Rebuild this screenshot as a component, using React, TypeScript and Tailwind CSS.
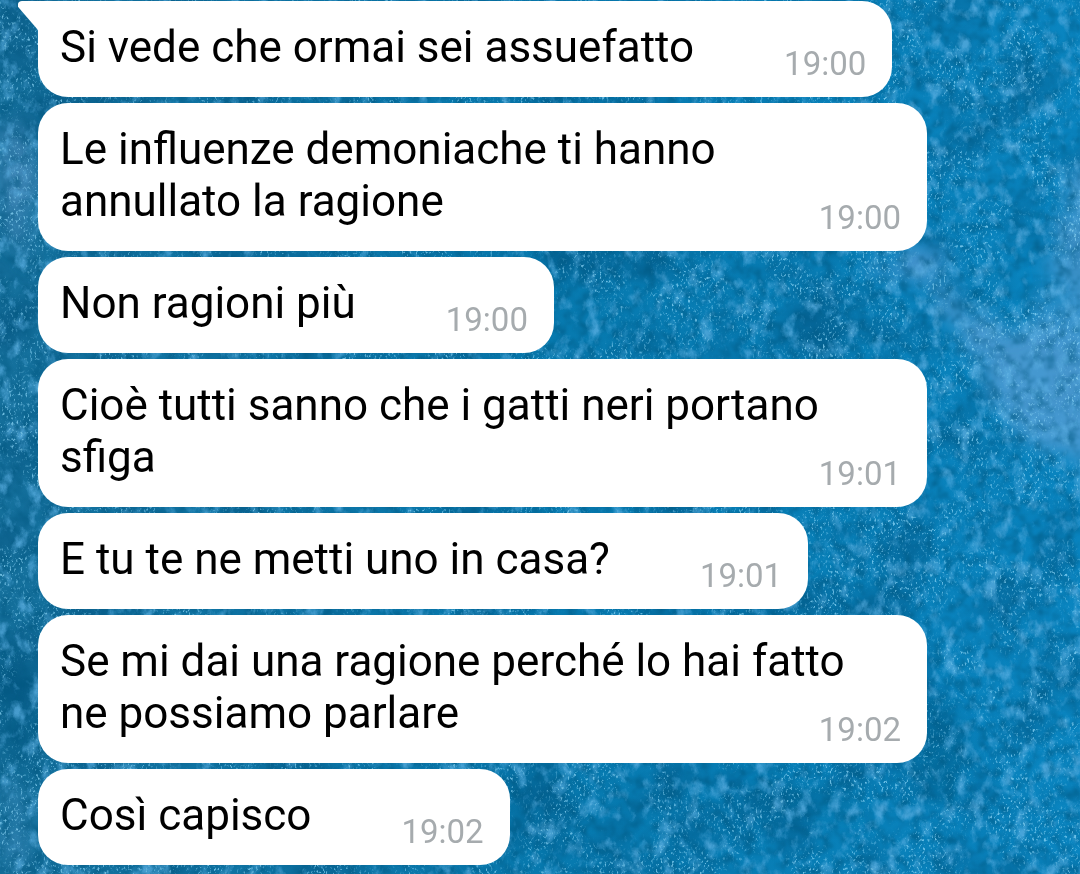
type Message = { text: string; time: string };

const messages: Message[] = [
  { text: "Si vede che ormai sei assuefatto", time: "19:00" },
  { text: "Le influenze demoniache ti hanno annullato la ragione", time: "19:00" },
  { text: "Non ragioni più", time: "19:00" },
  { text: "Cioè tutti sanno che i gatti neri portano sfiga", time: "19:01" },
  { text: "E tu te ne metti uno in casa?", time: "19:01" },
  { text: "Se mi dai una ragione perché lo hai fatto ne possiamo parlare", time: "19:02" },
  { text: "Così capisco", time: "19:02" },
];

function Wallpaper() {
  return (
    <svg
      aria-hidden="true"
      className="absolute inset-0 h-full w-full"
      viewBox="0 0 1080 874"
      preserveAspectRatio="xMidYMid slice"
    >
      <defs>
        <linearGradient id="base" x1="0" y1="0" x2="1" y2="0">
          <stop offset="0" stopColor="#15709c" />
          <stop offset="0.5" stopColor="#0779ae" />
          <stop offset="1" stopColor="#0a85c0" />
        </linearGradient>
        <filter id="soft" x="-50%" y="-50%" width="200%" height="200%">
          <feTurbulence type="fractalNoise" baseFrequency="0.04" numOctaves="3" seed="4" result="n" />
          <feDisplacementMap in="SourceGraphic" in2="n" scale="60" result="d" />
          <feGaussianBlur in="d" stdDeviation="9" />
        </filter>
        <filter id="shade" x="0" y="0" width="100%" height="100%" colorInterpolationFilters="sRGB">
          <feTurbulence type="fractalNoise" baseFrequency="0.014" numOctaves="6" seed="11" />
          <feColorMatrix values="0 0 0 0 0.01  0 0 0 0 0.31  0 0 0 0 0.48  2.4 0 0 0 -1.05" />
        </filter>
        <filter id="grain" x="0" y="0" width="100%" height="100%" colorInterpolationFilters="sRGB">
          <feTurbulence type="fractalNoise" baseFrequency="0.07 0.05" numOctaves="6" seed="7" result="fine" />
          <feColorMatrix in="fine" values="0 0 0 0 0.36  0 0 0 0 0.69  0 0 0 0 0.89  3.2 0 0 0 -1.65" result="haze" />
          <feTurbulence type="fractalNoise" baseFrequency="0.43 0.31" numOctaves="2" seed="57" result="tiny" />
          <feColorMatrix in="tiny" values="0 0 0 0 0.55  0 0 0 0 0.84  0 0 0 0 0.97  0 5 0 0 -2.85" result="specks" />
          <feTurbulence type="fractalNoise" baseFrequency="0.02" numOctaves="5" seed="23" result="wide" />
          <feColorMatrix in="wide" values="0 0 0 0 1  0 0 0 0 1  0 0 0 0 1  0 4 0 0 -1.5" result="mask" />
          <feComposite in="specks" in2="mask" operator="in" result="cut" />
          <feGaussianBlur in="cut" stdDeviation="0.5" result="points" />
          <feMerge>
            <feMergeNode in="haze" />
            <feMergeNode in="points" />
          </feMerge>
        </filter>
        <filter id="darkGrain" x="0" y="0" width="100%" height="100%" colorInterpolationFilters="sRGB">
          <feTurbulence type="fractalNoise" baseFrequency="0.09" numOctaves="5" seed="31" result="n" />
          <feColorMatrix in="n" values="0 0 0 0 0  0 0 0 0 0.34  0 0 0 0 0.5  0 2.5 0 0 -1.1" result="c" />
          <feGaussianBlur in="c" stdDeviation="0.8" />
        </filter>
      </defs>
      <rect width="1080" height="874" fill="url(#base)" />
      <rect width="1080" height="874" filter="url(#shade)" opacity="0.5" />
      <g filter="url(#soft)">
        <path
          d="M890 225 Q960 330 1000 410 Q1040 470 1100 455 V345 Q1030 320 980 330 Z"
          fill="#5a9fd6"
          opacity="0.75"
        />
        <path d="M1060 180 L1100 160 V350 L1045 330 Z" fill="#5a9fd6" opacity="0.6" />
        <ellipse cx="18" cy="185" rx="16" ry="65" fill="#5592c5" opacity="0.65" />
        <ellipse cx="910" cy="265" rx="50" ry="12" fill="#6d9fd8" opacity="0.6" />
        <ellipse cx="18" cy="835" rx="14" ry="45" fill="#4f97c7" opacity="0.4" />
        <ellipse cx="15" cy="705" rx="18" ry="65" fill="#075680" opacity="0.6" />
        <ellipse cx="935" cy="755" rx="30" ry="55" fill="#045985" opacity="0.5" />
        <ellipse cx="800" cy="800" rx="60" ry="18" fill="#055d89" opacity="0.5" />
      </g>
      <rect width="1080" height="874" filter="url(#darkGrain)" opacity="0.6" />
      <rect width="1080" height="874" filter="url(#grain)" opacity="0.75" />
    </svg>
  );
}

function BubbleTail() {
  return (
    <svg
      aria-hidden="true"
      className="absolute top-0 -left-5 h-8 w-10 text-white"
      viewBox="0 0 40 32"
      fill="currentColor"
    >
      <path d="M40 0 H4 C0 0 -1.500 4 1 7 L20 29 H40 Z" />
    </svg>
  );
}

function Bubble({ message, first }: { message: Message; first: boolean }) {
  return (
    <li
      className={
        first
          ? "relative w-fit max-w-full rounded-[30px] rounded-tl-none bg-white pt-5 pr-[26px] pb-6 pl-[22px]"
          : "w-fit max-w-full rounded-[30px] bg-white pt-5 pr-[26px] pb-6 pl-[22px]"
      }
    >
      {first && <BubbleTail />}
      <p className="relative flow-root text-[44px] leading-[52px] text-black">
        {message.text}
        <time className="float-right mt-[23px] -mb-[11px] ml-[90px] text-[33px] leading-10 text-[#a6abae]">
          {message.time}
        </time>
      </p>
    </li>
  );
}

export default function App() {
  return (
    <main className="relative min-h-screen overflow-hidden bg-[#0877ae] font-['Roboto','Liberation_Sans',sans-serif]">
      <Wallpaper />
      <ul className="relative flex flex-col gap-1.5 pt-px pr-[153px] pb-2 pl-[38px]">
        {messages.map((message, index) => (
          <Bubble key={message.text} message={message} first={index === 0} />
        ))}
      </ul>
    </main>
  );
}
